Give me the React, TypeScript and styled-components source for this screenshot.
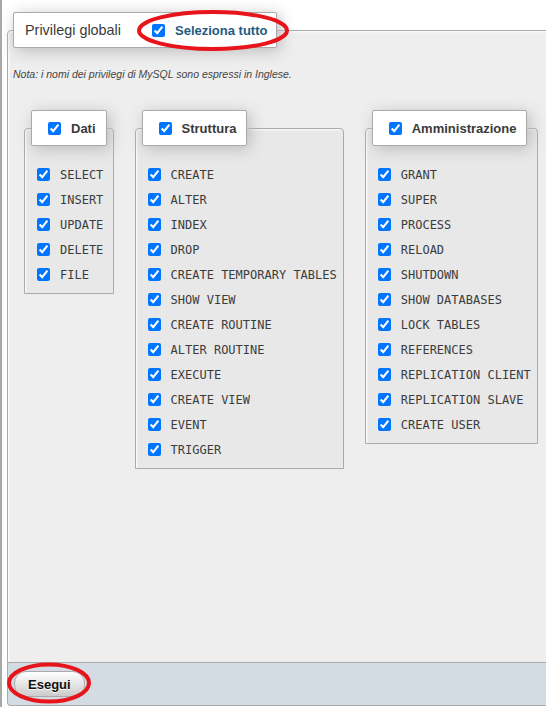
import React from "react";
import styled, { createGlobalStyle } from "styled-components";

const Global = createGlobalStyle`
  html, body { margin: 0; padding: 0; background: #fff; overflow: hidden; }
  body { font-family: "Liberation Sans", Arial, sans-serif; }
`;

const Page = styled.div`
  position: relative;
  height: 707px;
  box-sizing: border-box;
  border-left: 2px solid #a8a8a8;
  padding-left: 5px;
  overflow: hidden;
`;

const MainFieldset = styled.div`
  display: flex;
  flex-direction: column;
  align-items: flex-start;
  box-sizing: border-box;
  margin-top: 30px;
  margin-right: -20px;
  height: 633px;
  padding: 0 5px;
  border: 1px solid #aaa;
  border-radius: 4px 4px 0 0;
  background: #eee;
  box-shadow: 1px 1px 2px #fff inset;
`;

const Legend = styled.div<{ $inner?: boolean }>`
  display: flex;
  align-items: center;
  box-sizing: border-box;
  height: 36px;
  margin-top: -19px;
  margin-left: ${(p) => (p.$inner ? "-6px" : "0")};
  padding: ${(p) => (p.$inner ? "0 10px 0 16px" : "0 9px 0 11px")};
  background: #fff;
  border: 1px solid #aaa;
  border-radius: 2px;
  box-shadow: 3px 3px 15px #bbb;
  color: #444;
  white-space: nowrap;
`;

const LegendTitle = styled.span`
  font-size: 14.4px;
  color: #3a3a3a;
  margin-right: 31px;
`;

const Check = styled.input.attrs({ type: "checkbox" })`
  width: 13px;
  height: 13px;
  margin: 0;
  flex: none;
`;

const LegendLabel = styled.span<{ $link?: boolean }>`
  margin-left: 10px;
  font-size: 13px;
  font-weight: bold;
  color: ${(p) => (p.$link ? "#235a81" : "#3a3a3a")};
`;

const Note = styled.div`
  margin-top: 20px;
  font-size: 10.5px;
  line-height: 12px;
  font-style: italic;
  color: #444;
`;

const Groups = styled.div`
  display: flex;
  align-items: flex-start;
  gap: 21px;
  margin-top: 48px;
  margin-left: 11px;
`;

const Group = styled.div`
  display: flex;
  flex-direction: column;
  align-items: flex-start;
  box-sizing: border-box;
  padding: 0 6px 6px 12px;
  border: 1px solid #aaa;
  border-radius: 4px 4px 0 0;
  background: #e8e8e8;
  box-shadow: 1px 1px 2px #fff inset;
`;

const List = styled.div`
  display: flex;
  flex-direction: column;
  padding-top: 16px;
`;

const Row = styled.label`
  display: flex;
  align-items: center;
  height: 25px;
  gap: 10px;
`;

const Priv = styled.span`
  font-family: "DejaVu Sans Mono", "Liberation Mono", monospace;
  font-size: 12px;
  color: #3c3c3c;
  white-space: pre;
`;

const Footer = styled.div`
  display: flex;
  align-items: center;
  box-sizing: border-box;
  height: 43px;
  margin-right: -20px;
  padding-left: 6px;
  border: 1px solid #aaa;
  border-top: 0;
  border-radius: 0 0 4px 4px;
  background: #d3dce3;
`;

const Button = styled.button`
  box-sizing: border-box;
  height: 26px;
  padding: 0 13px;
  font-family: "Liberation Sans", Arial, sans-serif;
  font-size: 13px;
  font-weight: bold;
  color: #111;
  text-shadow: 0 1px 0 #fff;
  border: 1px solid #aaa;
  border-radius: 12px;
  background: linear-gradient(#fff, #ccc);
`;

const Overlay = styled.svg`
  position: absolute;
  left: 0;
  top: 0;
  width: 546px;
  height: 707px;
  pointer-events: none;
`;

const groups: { title: string; items: string[] }[] = [
  { title: "Dati", items: ["SELECT", "INSERT", "UPDATE", "DELETE", "FILE"] },
  {
    title: "Struttura",
    items: [
      "CREATE",
      "ALTER",
      "INDEX",
      "DROP",
      "CREATE TEMPORARY TABLES",
      "SHOW VIEW",
      "CREATE ROUTINE",
      "ALTER ROUTINE",
      "EXECUTE",
      "CREATE VIEW",
      "EVENT",
      "TRIGGER",
    ],
  },
  {
    title: "Amministrazione",
    items: [
      "GRANT",
      "SUPER",
      "PROCESS",
      "RELOAD",
      "SHUTDOWN",
      "SHOW DATABASES",
      "LOCK TABLES",
      "REFERENCES",
      "REPLICATION CLIENT",
      "REPLICATION SLAVE",
      "CREATE USER",
    ],
  },
];

export default function App() {
  return (
    <>
      <Global />
      <Page>
        <MainFieldset>
          <Legend>
            <LegendTitle>Privilegi globali</LegendTitle>
            <Check defaultChecked />
            <LegendLabel $link>Seleziona tutto</LegendLabel>
          </Legend>
          <Note>Nota: i nomi dei privilegi di MySQL sono espressi in Inglese.</Note>
          <Groups>
            {groups.map((g) => (
              <Group key={g.title}>
                <Legend $inner>
                  <Check defaultChecked />
                  <LegendLabel>{g.title}</LegendLabel>
                </Legend>
                <List>
                  {g.items.map((it) => (
                    <Row key={it}>
                      <Check defaultChecked />
                      <Priv>{it}</Priv>
                    </Row>
                  ))}
                </List>
              </Group>
            ))}
          </Groups>
        </MainFieldset>
        <Footer>
          <Button type="button">Esegui</Button>
        </Footer>
        <Overlay viewBox="0 0 546 707">
          <ellipse cx="211" cy="30.5" rx="74" ry="18.5" fill="none" stroke="#e8141b" strokeWidth="4" />
          <ellipse cx="47" cy="683" rx="40" ry="18.5" fill="none" stroke="#e8141b" strokeWidth="4" />
        </Overlay>
      </Page>
    </>
  );
}
